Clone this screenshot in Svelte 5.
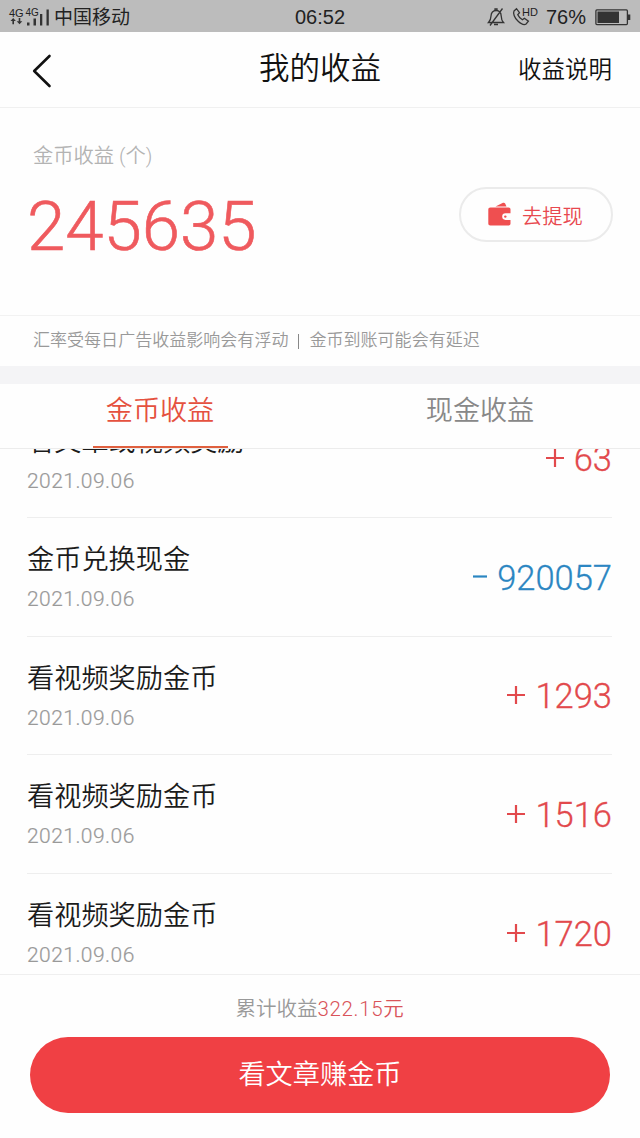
<script>
  let balance = $state('245635');
  let total = $state('322.15');
  let activeTab = $state('coin');

  const tabs = [
    { id: 'coin', label: '金币收益' },
    { id: 'cash', label: '现金收益' },
  ];

  const records = [
    { title: '看文章或视频奖励', date: '2021.09.06', amount: 63 },
    { title: '金币兑换现金', date: '2021.09.06', amount: -920057 },
    { title: '看视频奖励金币', date: '2021.09.06', amount: 1293 },
    { title: '看视频奖励金币', date: '2021.09.06', amount: 1516 },
    { title: '看视频奖励金币', date: '2021.09.06', amount: 1720 },
  ];
</script>

<div class="screen">
  <div class="status-bar">
    <div class="status-left">
      <svg class="signal" viewBox="0 0 42 20" aria-hidden="true">
        <text x="0" y="9.5" font-size="11">4G</text>
        <text x="16.5" y="8.5" font-size="10">4G</text>
        <path class="fill" d="M4.2 11l2.700 3H5v3.200H3.400v-3.200H1.500zM10.500 17.200l-2.800-3h2v-3.200h1.600v3.200h2z" />
        <path class="fill" d="M18 15.500h2.500v3H18zM24.500 11.500H27v7h-2.500zM31 7h2.300v11.500H31zM37.500 2.500h2.300v16h-2.300z" />
      </svg>
      <span class="carrier">中国移动</span>
    </div>
    <span class="clock">06:52</span>
    <div class="status-right">
      <svg class="bell" viewBox="0 0 18 20" aria-hidden="true">
        <path d="M1.500 15.500h15c-2-2-2.200-3.500-2.300-6.500-.1-3.500-2-5.300-5-5.300S4.200 5.500 4 9c-.1 3-.5 4.500-2.500 6.500zM8 3.500V2h2v1.500M7 17.500h4M3 18.500L15.500 1.500" />
      </svg>
      <svg class="call" viewBox="0 0 26 20" aria-hidden="true">
        <path d="M2 4l2.500-2.300 3 4-1.700 2c.9 2 2.500 3.800 4.600 5l2-1.500 4 3-2.300 2.800c-1.500 1-5 0-8.200-3C2.500 11 .8 6.300 2 4z" />
        <text x="10" y="8.500" font-size="11">HD</text>
      </svg>
      <span class="percent">76%</span>
      <svg class="battery" viewBox="0 0 36 17" aria-hidden="true">
        <rect x=".9" y=".9" width="31.500" height="14.700" rx="1" />
        <path class="fill" d="M2.500 2.500h21.500v11.500H2.500zM33 5.500h2.300v5.500H33z" />
      </svg>
    </div>
  </div>

  <header class="nav">
    <button class="back" aria-label="返回">
      <svg viewBox="0 0 20 34" aria-hidden="true">
        <path d="M17.500 2L2.200 17l15.300 15" />
      </svg>
    </button>
    <h1>我的收益</h1>
    <button class="help">收益说明</button>
  </header>

  <section class="summary">
    <div class="balance">
      <p class="balance-label">金币收益 (个)</p>
      <p class="balance-value">{balance}</p>
    </div>
    <button class="withdraw">
      <svg viewBox="0 0 23 24" aria-hidden="true">
        <path d="M7.500 4.500L15 .8c1-.4 1.800.1 2.300 1l1.200 2.700z" />
        <path d="M2.500 5.500h18c1.300 0 2 .8 2 2v3.800h-5a3.300 3.300 0 0 0 0 6.600h5v3.600c0 1.300-.7 2-2 2h-18c-1.500 0-2.200-.7-2.200-2v-14c0-1.200.7-2 2.200-2z" />
        <circle cx="17.300" cy="14.600" r="1.200" />
      </svg>
      <span>去提现</span>
    </button>
  </section>

  <p class="notice">汇率受每日广告收益影响会有浮动<i></i>金币到账可能会有延迟</p>

  <nav class="tabs">
    {#each tabs as tab (tab.id)}
      <button class="tab" class:active={activeTab === tab.id} onclick={() => (activeTab = tab.id)}>
        <span>{tab.label}</span>
      </button>
    {/each}
  </nav>

  <div class="list">
    {#each records as record, i (i)}
      <div class="record">
        <div class="record-info">
          <p class="record-title">{record.title}</p>
          <p class="record-date">{record.date}</p>
        </div>
        <div class="record-amount" class:spent={record.amount < 0}>
          <svg viewBox="0 0 18 20" aria-hidden="true">
            <path d={record.amount < 0 ? 'M4 9.500h14' : 'M0 10h18M9 1v18'} />
          </svg>
          <span>{Math.abs(record.amount)}</span>
        </div>
      </div>
    {/each}
  </div>

  <footer class="footer">
    <p class="total">累计收益<span>{total}元</span></p>
    <button class="earn">看文章赚金币</button>
  </footer>
</div>

<style>
  :global(body) {
    background: #fefefe;
  }

  .screen {
    width: 640px;
    height: 1138px;
    display: flex;
    flex-direction: column;
    overflow: hidden;
    background: #fefefe;
    color: #1b1b1b;
    font-family: Roboto, 'Noto Sans CJK SC', sans-serif;
    font-weight: 350;
  }

  p,
  h1 {
    margin: 0;
    font-weight: inherit;
  }

  button {
    border: 0;
    padding: 0;
    background: none;
    color: inherit;
    font: inherit;
  }

  svg {
    display: block;
    flex: none;
    overflow: visible;
  }

  .status-bar {
    flex: none;
    height: 32px;
    display: grid;
    grid-template-columns: 1fr auto 1fr;
    align-items: center;
    padding: 0 9px;
    background: #bcbcbc;
    color: #222;
    font-family: 'Liberation Sans', 'Noto Sans CJK SC', sans-serif;
    font-weight: 400;
  }

  .status-left,
  .status-right {
    display: flex;
    align-items: center;
  }

  .status-right {
    justify-content: flex-end;
  }

  .status-bar path,
  .status-bar rect {
    fill: none;
    stroke: #333;
    stroke-width: 1.3;
  }

  .status-bar .fill {
    fill: #333;
    stroke: none;
  }

  .status-bar text {
    fill: #222;
    font-family: 'Liberation Sans', sans-serif;
  }

  .signal {
    width: 42px;
    height: 20px;
  }

  .carrier {
    margin-left: 3px;
    padding-top: 2px;
    font-size: 19px;
    line-height: 32px;
  }

  .clock {
    font-size: 20px;
    line-height: 32px;
  }

  .bell {
    width: 18px;
    height: 20px;
  }

  .call {
    width: 26px;
    height: 20px;
    margin-left: 7px;
  }

  .percent {
    margin-left: 8px;
    font-size: 20px;
  }

  .battery {
    width: 36px;
    height: 17px;
    margin: 0 0 0 9px;
  }

  .nav {
    flex: none;
    height: 75px;
    display: grid;
    grid-template-columns: 1fr auto 1fr;
    align-items: center;
    padding: 0 28px 0 32px;
    border-bottom: 1px solid #f0f0f0;
    color: #111;
  }

  .back svg {
    width: 20px;
    height: 34px;
    margin-top: 3px;
  }

  .back path {
    fill: none;
    stroke: #111;
    stroke-width: 2.6;
    stroke-linecap: round;
    stroke-linejoin: round;
  }

  .nav h1 {
    margin-left: -4px;
    font-size: 30.500px;
    line-height: 74px;
    height: 75px;
  }

  .help {
    justify-self: end;
    height: 75px;
    font-size: 23.500px;
    line-height: 70px;
  }

  .summary {
    flex: none;
    height: 207px;
    display: flex;
    justify-content: space-between;
    padding: 0 27px 0 27px;
    border-bottom: 1px solid #f2f2f2;
  }

  .balance-label {
    margin: 33px 0 0 6px;
    color: #b3b3b3;
    font-size: 20.300px;
    line-height: 30px;
  }

  .balance-value {
    margin-top: 16px;
    color: #ef5a5e;
    font-size: 69px;
    line-height: 80px;
    -webkit-text-stroke: 0.600px currentColor;
  }

  .withdraw {
    width: 154px;
    height: 55px;
    box-sizing: border-box;
    display: flex;
    align-items: center;
    gap: 11px;
    margin-top: 79px;
    padding-left: 27px;
    border: 2px solid #ebebeb;
    border-radius: 28px;
    color: #e8484f;
    font-size: 20.300px;
  }

  .withdraw svg {
    width: 23px;
    height: 24px;
    margin-top: -2px;
    fill: #ef4f50;
  }

  .notice {
    flex: none;
    height: 50px;
    padding-left: 33px;
    border-bottom: 18px solid #f4f4f6;
    color: #999;
    font-size: 17.050px;
    line-height: 48px;
  }

  .notice i {
    display: inline-block;
    width: 1px;
    height: 15px;
    margin: 0 10px;
    background: #888;
    vertical-align: -3px;
  }

  .tabs {
    flex: none;
    height: 64px;
    display: flex;
    border-bottom: 1px solid #ececec;
  }

  .tab {
    flex: 1;
    display: flex;
    justify-content: center;
    color: #888;
    font-size: 27.100px;
    line-height: 55px;
  }

  .tab span {
    width: 135px;
    height: 62px;
    border-bottom: 2px solid transparent;
  }

  .tab.active {
    color: #e5513f;
  }

  .tab.active span {
    border-color: #e0603f;
  }

  .list {
    flex: 1;
    min-height: 0;
    display: flex;
    flex-direction: column;
    justify-content: flex-end;
    overflow: hidden;
    padding: 0 28px 0 27px;
    margin-bottom: -18.600px;
  }

  .record {
    flex: none;
    height: 118.600px;
    box-sizing: border-box;
    display: flex;
    justify-content: space-between;
    border-bottom: 1px solid #eee;
  }

  .record-title {
    margin-top: 22px;
    font-size: 27.200px;
    line-height: 40px;
  }

  .record-date {
    margin-top: 3px;
    color: #999;
    font-size: 21px;
    letter-spacing: 0.450px;
    line-height: 32px;
    -webkit-text-stroke: 0.200px currentColor;
  }

  .record-amount {
    height: 119px;
    display: flex;
    align-items: center;
    gap: 10px;
    color: #e2494c;
    font-size: 34.500px;
    -webkit-text-stroke: 0.300px currentColor;
  }

  .record-amount svg {
    width: 18px;
    height: 20px;
    margin-top: -2px;
    fill: none;
    stroke: currentColor;
    stroke-width: 2.200;
  }

  .record-amount.spent {
    color: #2b86c2;
  }

  .footer {
    flex: none;
    height: 164px;
    box-sizing: border-box;
    display: flex;
    flex-direction: column;
    align-items: center;
    border-top: 1px solid #efefef;
    background: #fefefe;
    z-index: 1;
  }

  .total {
    margin-top: 17px;
    color: #999;
    font-size: 20.500px;
    line-height: 34px;
  }

  .total span {
    color: #d9545a;
    letter-spacing: 0.700px;
  }

  .earn {
    width: 580px;
    height: 76px;
    margin-top: 11px;
    border-radius: 38px;
    background: #f04044;
    color: #fff;
    font-size: 27.200px;
    line-height: 75px;
  }
</style>
